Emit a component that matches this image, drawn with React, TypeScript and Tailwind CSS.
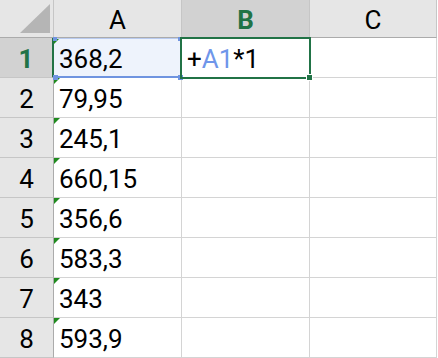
import React from "react";

const values = ["368,2", "79,95", "245,1", "660,15", "356,6", "583,3", "343", "593,9"];

function ErrTri() {
  return (
    <svg className="absolute left-0 top-0" width="6" height="6" viewBox="0 0 6 6">
      <polygon points="0,0 6,0 0,6" fill="#1e8a1e" />
    </svg>
  );
}

export default function App() {
  return (
    <div className="relative w-[438px] h-[358px] overflow-hidden bg-white text-black [font-family:Roboto,sans-serif] text-[26px]">
      <div className="grid grid-cols-[54px_128px_128px_127px] grid-rows-[38px_repeat(8,40px)]">
        {/* corner */}
        <div className="relative bg-[#e6e6e6] border-r border-b border-r-[#c6c6c6] border-b-[#ababab]">
          <svg className="absolute left-0 top-0" width="53" height="37" viewBox="0 0 53 37">
            <polygon points="20,33 50,33 50,4" fill="#b5b5b5" />
          </svg>
        </div>
        <div className="bg-[#e6e6e6] border-r border-b border-r-[#c6c6c6] border-b-[#ababab] flex justify-center leading-[37px] pt-[2px]">
          A
        </div>
        <div className="bg-[#d2d2d2] border-r border-b border-r-[#c6c6c6] border-b-[#ababab] flex justify-center leading-[37px] pt-[2px] font-bold text-[#217346]">
          B
        </div>
        <div className="bg-[#e6e6e6] border-r border-b border-r-[#c6c6c6] border-b-[#ababab] flex justify-center leading-[37px] pt-[2px]">
          C
        </div>

        {values.map((v, i) => (
          <React.Fragment key={i}>
            <div
              className={
                i === 0
                  ? "bg-[#d2d2d2] border-r-2 border-b border-r-[#217346] border-b-[#c6c6c6] flex justify-center leading-[39px] pt-[2px] font-bold text-[#217346]"
                  : "bg-[#e6e6e6] border-r border-b border-r-[#ababab] border-b-[#c6c6c6] flex justify-center leading-[39px] pt-[2px]"
              }
            >
              {i + 1}
            </div>
            <div
              className={
                "relative border-r border-b border-[#d4d4d4] pl-[5px] leading-[39px] pt-[2px] " +
                (i === 0 ? "bg-[#eef3fc]" : "bg-white")
              }
            >
              <ErrTri />
              {v}
            </div>
            <div className="relative border-r border-b border-[#d4d4d4] pl-[5px] leading-[39px] pt-[2px]">
              {i === 0 && (
                <span>
                  +<span className="text-[#6f96ea]">A1</span>*1
                </span>
              )}
            </div>
            <div className="border-r border-b border-[#d4d4d4]" />
          </React.Fragment>
        ))}
      </div>

      {/* A1 reference border (blue) */}
      <div className="absolute left-[54px] top-[38px] w-[127px] h-[1px] bg-[#b9cbf0]" />
      <div className="absolute left-[54px] top-[76px] w-[127px] h-[2px] bg-[#6f94e0]" />
      <div className="absolute left-[53px] top-[37px] w-[4px] h-[4px] bg-[#6f94e0]" />
      <div className="absolute left-[178px] top-[37px] w-[4px] h-[4px] bg-[#6f94e0]" />
      <div className="absolute left-[53px] top-[75px] w-[5px] h-[5px] bg-[#6f94e0]" />
      <div className="absolute left-[178px] top-[75px] w-[5px] h-[5px] bg-[#6f94e0]" />

      {/* B1 active cell border (green) */}
      <div className="absolute left-[180px] top-[37px] w-[131px] h-[42px] border-2 border-[#217346]" />
      <div className="absolute left-[306px] top-[74px] w-[7px] h-[7px] bg-white" />
      <div className="absolute left-[307px] top-[75px] w-[5px] h-[5px] bg-[#217346]" />
    </div>
  );
}
